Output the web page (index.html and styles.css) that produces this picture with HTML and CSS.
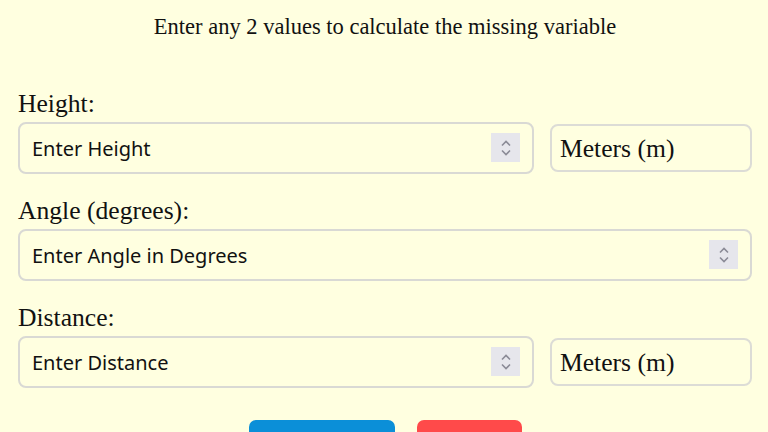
FILE: index.html
```html
<!DOCTYPE html>
<html lang="en">
  <head>
    <meta charset="UTF-8" />
    <meta name="viewport" content="width=device-width, initial-scale=1.0" />
    <title>Height, Angle and Distance Calculator</title>
    <link rel="stylesheet" href="styles.css">
  </head>
  <body>
    <div class="calculator">
      <p class="intro">Enter any 2 values to calculate the missing variable</p>

      <div class="field">
        <label for="height">Height:</label>
        <div class="field-row">
          <div class="number-box">
            <input id="height" type="number" placeholder="Enter Height" />
            <span class="spinner">
              <svg width="12" height="22" viewBox="0 0 12 22">
                <path d="M2 8.5 L6 4.5 L10 8.5 M2 13.5 L6 17.5 L10 13.5" />
              </svg>
            </span>
          </div>
          <select class="unit-select" aria-label="height unit">
            <option>Meters (m)</option>
            <option>Feet (ft)</option>
          </select>
        </div>
      </div>

      <div class="field">
        <label for="angle">Angle (degrees):</label>
        <div class="field-row">
          <div class="number-box">
            <input id="angle" type="number" placeholder="Enter Angle in Degrees" />
            <span class="spinner">
              <svg width="12" height="22" viewBox="0 0 12 22">
                <path d="M2 8.5 L6 4.5 L10 8.5 M2 13.5 L6 17.5 L10 13.5" />
              </svg>
            </span>
          </div>
        </div>
      </div>

      <div class="field">
        <label for="distance">Distance:</label>
        <div class="field-row">
          <div class="number-box">
            <input id="distance" type="number" placeholder="Enter Distance" />
            <span class="spinner">
              <svg width="12" height="22" viewBox="0 0 12 22">
                <path d="M2 8.5 L6 4.5 L10 8.5 M2 13.5 L6 17.5 L10 13.5" />
              </svg>
            </span>
          </div>
          <select class="unit-select" aria-label="distance unit">
            <option>Meters (m)</option>
            <option>Feet (ft)</option>
          </select>
        </div>
      </div>

      <div class="buttons">
        <button class="btn calculate-btn">Calculate</button>
        <button class="btn clear-btn">Clear</button>
      </div>
    </div>
  </body>
</html>
```

FILE: styles.css
```css
body {
  margin: 0;
  background-color: lightyellow;
  color: #111;
  font-family: "Liberation Serif", "Times New Roman", serif;
}

.calculator {
  padding: 6px 16px 0 18px;
}

.intro {
  margin: 0 0 42px;
  text-align: center;
  font-size: 22.5px;
  line-height: 42px;
}

.field {
  margin-bottom: 23px;
}

.field label {
  display: block;
  font-size: 25.6px;
  line-height: 28px;
  margin-bottom: 4px;
}

.field-row {
  display: flex;
  align-items: center;
  gap: 16px;
}

.number-box {
  position: relative;
  flex: 1;
}

.number-box input {
  box-sizing: border-box;
  width: 100%;
  height: 52px;
  padding: 0 48px 0 12px;
  border: 2px solid #d9d9d4;
  border-radius: 8px;
  background: transparent;
  font-family: "Noto Sans", sans-serif;
  font-size: 20px;
  color: #111;
  outline: none;
  -moz-appearance: textfield;
}

.number-box input::placeholder {
  color: #111;
  opacity: 1;
}

.number-box input::-webkit-inner-spin-button,
.number-box input::-webkit-outer-spin-button {
  -webkit-appearance: none;
  margin: 0;
}

.spinner {
  position: absolute;
  top: 11px;
  right: 14px;
  width: 29px;
  height: 29px;
  display: flex;
  align-items: center;
  justify-content: center;
  background-color: #e6e6ec;
  pointer-events: none;
}

.spinner path {
  fill: none;
  stroke: #8a8a96;
  stroke-width: 1.6;
}

.unit-select {
  box-sizing: border-box;
  width: 202px;
  height: 48px;
  padding: 0 8px;
  border: 2px solid #dcdcd6;
  border-radius: 8px;
  background: transparent;
  font-family: "Liberation Serif", "Times New Roman", serif;
  font-size: 25.6px;
  color: #111;
  -webkit-appearance: none;
  appearance: none;
  outline: none;
}

.buttons {
  display: flex;
  justify-content: center;
  gap: 22px;
  margin-top: 32px;
}

.btn {
  padding: 14px 28px;
  border: none;
  border-radius: 7px;
  color: white;
  font-family: "Noto Sans", sans-serif;
  font-size: 20px;
  cursor: pointer;
}

.calculate-btn {
  background-color: #0b8fd8;
  width: 146px;
}

.clear-btn {
  background-color: #ff4a4a;
  width: 105px;
}
```
